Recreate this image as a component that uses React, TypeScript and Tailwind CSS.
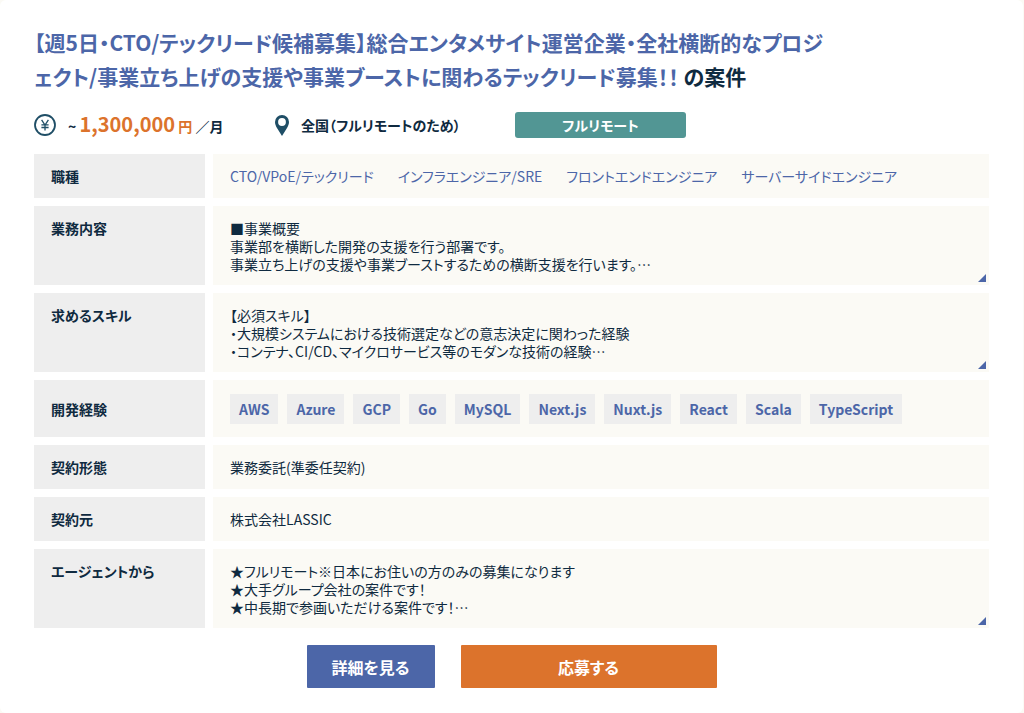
import type { ReactNode } from "react";

const ROLES = [
  "CTO/VPoE/テックリード",
  "インフラエンジニア/SRE",
  "フロントエンドエンジニア",
  "サーバーサイドエンジニア",
];

const SKILLS = [
  "AWS",
  "Azure",
  "GCP",
  "Go",
  "MySQL",
  "Next.js",
  "Nuxt.js",
  "React",
  "Scala",
  "TypeScript",
];

const DESCRIPTION = [
  "■事業概要",
  "事業部を横断した開発の支援を行う部署です。",
  "事業立ち上げの支援や事業ブーストするための横断支援を行います。…",
];

const REQUIREMENTS = [
  "【必須スキル】",
  "・大規模システムにおける技術選定などの意志決定に関わった経験",
  "・コンテナ、CI/CD、マイクロサービス等のモダンな技術の経験…",
];

const AGENT_NOTES = [
  "★フルリモート※日本にお住いの方のみの募集になります",
  "★大手グループ会社の案件です！",
  "★中長期で参画いただける案件です！…",
];

function YenIcon() {
  return (
    <svg viewBox="0 0 22 22" className="size-[22px] shrink-0" fill="none" stroke="#1f4e66" aria-hidden="true">
      <circle cx="11" cy="11" r="10" strokeWidth="1.8" />
      <path d="M7.600 5.800 11 11l3.400-5.200M11 11v5.400M7.400 10.900h7.200M7.400 13.500h7.200" strokeWidth="1.3" />
    </svg>
  );
}

function PinIcon() {
  return (
    <svg viewBox="0 0 14 21" className="h-[21px] w-[14px] shrink-0" fill="#1f4e66" aria-hidden="true">
      <path
        fillRule="evenodd"
        d="M7 0a7 7 0 0 0-7 7c0 2.200 1 4.300 2.300 6.600L7 21l4.700-7.400C13 11.300 14 9.200 14 7a7 7 0 0 0-7-7Zm0 3.100a3.900 3.900 0 1 1 0 7.800 3.900 3.900 0 0 1 0-7.800Z"
      />
    </svg>
  );
}

function Row({ label, children }: { label: string; children: ReactNode }) {
  return (
    <div className="flex min-h-11 gap-2">
      <dt className="w-[171px] shrink-0 bg-[#eeeeee] px-[17px] pt-[13px] pb-3 font-bold">{label}</dt>
      <dd className="relative min-w-0 grow bg-[#fbfaf5] px-[17px] pt-[13px] pb-3">{children}</dd>
    </div>
  );
}

function Excerpt({ lines, label }: { lines: string[]; label: string }) {
  return (
    <>
      {lines.map((line) => (
        <p key={line}>{line}</p>
      ))}
      <button type="button" aria-label={label} className="absolute right-[3px] bottom-[3px]">
        <svg viewBox="0 0 8 8" className="block size-2" fill="#4c66a8" aria-hidden="true">
          <path d="M8 0v8H0Z" />
        </svg>
      </button>
    </>
  );
}

export default function App() {
  return (
    <div className="min-h-screen bg-[#fbfaf5] font-['Noto_Sans_CJK_JP',sans-serif] text-[14px] leading-[18px] text-[#0f2a40] [font-feature-settings:'palt']">
      <article className="mr-px min-h-screen rounded-md bg-white px-[34px] py-[25px]">
        <h2 className="max-w-[800px] text-[21px] leading-[34px] font-bold break-all">
          <a href="#detail" className="text-[#4c66a8]">
            【週5日・CTO/テックリード候補募集】総合エンタメサイト運営企業・全社横断的なプロジェクト/事業立ち上げの支援や事業ブーストに関わるテックリード募集！！
          </a>{" "}
          の案件
        </h2>

        <div className="mt-[19px] flex items-center">
          <div className="flex w-[241px] items-center gap-3">
            <YenIcon />
            <p className="font-bold">
              ~ <span className="text-[20px] text-[#dc732c]">1,300,000</span>{" "}
              <span className="text-[#dc732c]">円</span> ／月
            </p>
          </div>
          <div className="flex w-[240px] items-center gap-3">
            <PinIcon />
            <p className="font-bold">全国（フルリモートのため）</p>
          </div>
          <span className="w-[171px] rounded-[3px] bg-[#529694] py-1 text-center font-bold text-white">
            フルリモート
          </span>
        </div>

        <dl className="mt-4 flex flex-col gap-2">
          <Row label="職種">
            <div className="flex flex-wrap gap-x-6">
              {ROLES.map((role) => (
                <a key={role} href="#role" className="text-[#4c66a8]">
                  {role}
                </a>
              ))}
            </div>
          </Row>
          <Row label="業務内容">
            <Excerpt lines={DESCRIPTION} label="業務内容をすべて表示" />
          </Row>
          <Row label="求めるスキル">
            <Excerpt lines={REQUIREMENTS} label="求めるスキルをすべて表示" />
          </Row>
          <div className="flex gap-2">
            <dt className="flex w-[171px] shrink-0 items-center bg-[#eeeeee] px-[17px] font-bold">開発経験</dt>
            <dd className="flex min-w-0 grow flex-wrap gap-[9px] bg-[#fbfaf5] px-[17px] pt-[14px] pb-[13px]">
              {SKILLS.map((skill) => (
                <a key={skill} href="#skill" className="bg-[#eeeeee] px-[9px] py-[6px] font-bold text-[#4c66a8]">
                  {skill}
                </a>
              ))}
            </dd>
          </div>
          <Row label="契約形態">業務委託(準委任契約)</Row>
          <Row label="契約元">株式会社LASSIC</Row>
          <Row label="エージェントから">
            <Excerpt lines={AGENT_NOTES} label="エージェントからのコメントをすべて表示" />
          </Row>
        </dl>

        <div className="mt-[17px] flex justify-center gap-[26px] text-[16px] font-bold text-white">
          <button type="button" className="h-[43px] w-32 rounded-[1px] bg-[#4c66a8]">
            詳細を見る
          </button>
          <button type="button" className="h-[43px] w-64 rounded-[1px] bg-[#dc732c]">
            応募する
          </button>
        </div>
      </article>
    </div>
  );
}
